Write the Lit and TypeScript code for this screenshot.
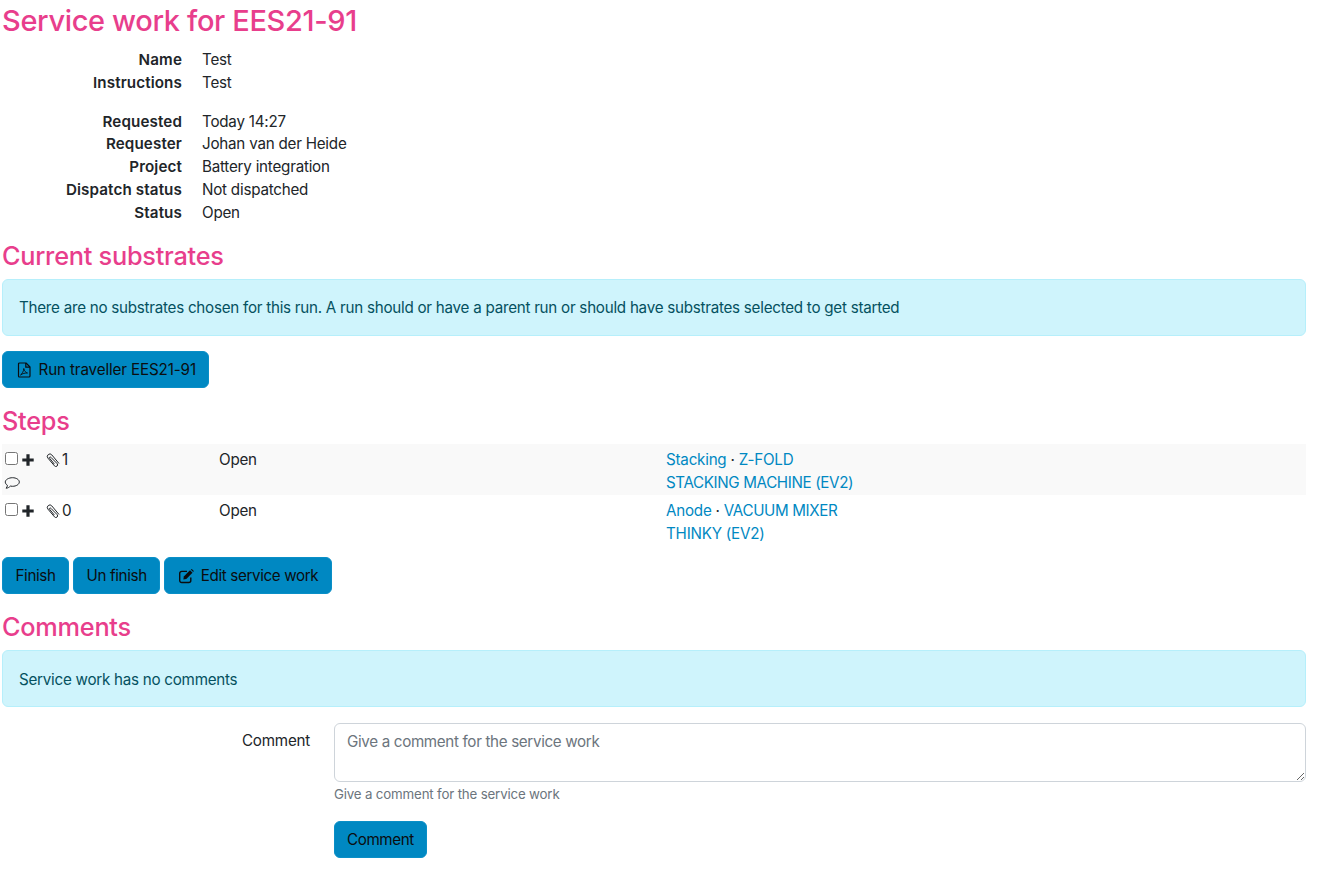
import { LitElement, html, css } from "lit";
import { customElement } from "lit/decorators.js";

const pdf = html`<svg class="ic" viewBox="0 0 16 16" fill="none" stroke="currentColor" stroke-width="1.200"><path d="M3.500 1h6.500l4 4v9a1 1 0 0 1-1 1H3.500a1 1 0 0 1-1-1V2a1 1 0 0 1 1-1z" stroke-linejoin="round"/><path d="M9.800 1v4.200H14"/><path d="M4.500 13c1.800-1.200 3.200-4 3.300-6.500.4 2.500 2 4 3.700 4.500-2.300-.1-5 .5-7 2z" stroke-width=".9" stroke-linejoin="round"/></svg>`;
const edit = html`<svg class="ic" viewBox="0 0 16 16" fill="none" stroke="currentColor" stroke-width="1.400"><path d="M12.800 9.500v3a2 2 0 0 1-2 2H3.700a2 2 0 0 1-2-2V5.400a2 2 0 0 1 2-2h5.300"/><path d="M5.800 8.500 12 2.300l2.500 2.500-6.200 6.200-2.900.4z" fill="currentColor" stroke="none"/><path d="M12.800 1.500 13.800 .9l2 2-.6 1z" fill="currentColor" stroke="none"/></svg>`;
const plus = html`<svg class="plus" viewBox="0 0 12 12"><path d="M4.400 .3h3.200v4.100h4.100v3.200H7.600v4.100H4.400V7.600H.3V4.400h4.100z" fill="#212529"/></svg>`;
const clip = html`<svg class="clip" viewBox="0 0 14 14" fill="none" stroke="#212529" stroke-width="1"><path d="M13 10.500 5.800 1.900a2.500 2.500 0 0 0-3.900 3.200l6.600 7.800a1.700 1.700 0 0 0 2.700-2.200L4.900 4.300a.8.800 0 0 0-1.300 1l4.800 5.800"/></svg>`;
const bubble = html`<svg class="bubble" viewBox="0 0 16 12" fill="none" stroke="#212529" stroke-width="1"><path d="M8.500.7c3.700 0 6.800 1.900 6.800 4.300s-3.100 4.300-6.800 4.300c-.8 0-1.500-.1-2.200-.2-1 1.100-2.600 2.100-4.200 2.100.7-.7 1.300-1.700 1.300-2.900C2 7.400 1.300 6.200 1.300 5 1.300 2.600 4.800.7 8.500.7z"/></svg>`;

@customElement("app-root")
export class AppRoot extends LitElement {
  static styles = css`
    :host { display: block; padding: 0 14px 0 2px; font-family: Inter, "Liberation Sans", sans-serif; font-size: 15.2px; line-height: 22.8px; color: #212529; letter-spacing: -.23px; }
    h1, h2 { margin: 0; color: #e83e8c; font-weight: 500; line-height: 1.2; }
    h1 { font-size: 29px; line-height: 36.500px; letter-spacing: -.35px; padding-top: 3px; margin-bottom: 9.500px; }
    h2 { font-size: 25.300px; letter-spacing: -.25px; margin-bottom: 8px; }
    dl { margin: 0 0 16px; display: grid; grid-template-columns: 180px 1fr; column-gap: 20px; }
    dt { font-weight: 600; text-align: right; letter-spacing: .12px; }
    dd { margin: 0; }
    .gap { grid-column: 1 / 3; height: 16px; }
    .alert { background: #cff4fc; border: 1px solid #b6effb; color: #055160; border-radius: 6px; padding: 17.500px 16px 14.500px; margin-bottom: 15.500px; line-height: 22.800px; letter-spacing: -.26px; }
    .btn { display: inline-flex; align-items: center; gap: 7px; height: 37px; box-sizing: border-box; padding: 2px 12.500px 0; background: #0088c2; border: 1px solid #0a8fc7; border-radius: 6px; color: #0b0d0f; font: inherit; letter-spacing: -.37px; }
    .btn.wide { letter-spacing: -.13px; }
    .btn.com { letter-spacing: -.38px; padding: 2px 12px 0; }
    .ic { width: 16px; height: 16px; margin-bottom: 2px; }
    .runbar { margin-bottom: 17.500px; }
    .steps { margin: .6px 0 10.400px; }
    .row { display: grid; grid-template-columns: 213px 447px 1fr; height: 51.400px; box-sizing: border-box; padding: 4.400px 0 0; }
    .row.odd { background: #f9f9f9; padding-top: 5px; }
    .row > div { padding: 0 4px; }
    .row > .tc { padding: 0 3px; }
    .tools { display: flex; flex-wrap: wrap; align-items: center; height: 22.800px; }
    .cb { width: 13px; height: 13px; box-sizing: border-box; border: 1px solid #767676; border-radius: 2.500px; background: #fff; margin: 0 4px 3px 0; }
    .plus { width: 12px; height: 12px; margin: 0 12px 1px 0; }
    .clip { width: 14px; height: 14px; margin: 0 2px 1px 0; }
    .bubble { width: 16px; height: 12px; display: block; margin: 5px 0 0 -1px; }
    a { color: #0088c2; text-decoration: none; }
    a.up { letter-spacing: -.38px; }
    .actions { display: flex; gap: 4px; margin-bottom: 17.500px; }
    .form { display: grid; grid-template-columns: 308px 1fr; column-gap: 24px; }
    .form label { text-align: right; padding-top: 8px; }
    textarea { display: block; box-sizing: border-box; width: 100%; height: 59.500px; margin: .5px 0 0; padding: 7px 12px 4px; border: 1px solid #ced4da; border-radius: 6px; font: inherit; letter-spacing: -.34px; color: #212529; }
    textarea::placeholder { color: #6c757d; opacity: 1; }
    .help { font-size: 13.300px; line-height: 20px; letter-spacing: -.17px; color: #6c757d; margin-top: 1.500px; margin-bottom: 17px; }
    .pad { height: 11px; }
  `;

  render() {
    return html`
      <h1>Service work for EES21-91</h1>
      <dl>
        <dt>Name</dt><dd>Test</dd>
        <dt>Instructions</dt><dd>Test</dd>
        <div class="gap"></div>
        <dt>Requested</dt><dd>Today 14:27</dd>
        <dt>Requester</dt><dd>Johan van der Heide</dd>
        <dt>Project</dt><dd>Battery integration</dd>
        <dt>Dispatch status</dt><dd>Not dispatched</dd>
        <dt>Status</dt><dd>Open</dd>
      </dl>
      <h2>Current substrates</h2>
      <div class="alert">There are no substrates chosen for this run. A run should or have a parent run or should have substrates selected to get started</div>
      <div class="runbar"><button class="btn wide">${pdf}Run traveller EES21-91</button></div>
      <h2>Steps</h2>
      <div class="steps">
        <div class="row odd">
          <div class="tc"><div class="tools"><input type="checkbox" class="cb" />${plus}${clip}<span>1</span></div>${bubble}</div>
          <div>Open</div>
          <div><a href="#">Stacking</a> · <a href="#">Z-FOLD</a><br /><a class="up" href="#">STACKING MACHINE (EV2)</a></div>
        </div>
        <div class="row">
          <div class="tc"><div class="tools"><input type="checkbox" class="cb" />${plus}${clip}<span>0</span></div></div>
          <div>Open</div>
          <div><a href="#">Anode</a> · <a class="up" href="#">VACUUM MIXER</a><br /><a href="#">THINKY (EV2)</a></div>
        </div>
      </div>
      <div class="actions">
        <button class="btn">Finish</button>
        <button class="btn">Un finish</button>
        <button class="btn">${edit}Edit service work</button>
      </div>
      <h2>Comments</h2>
      <div class="alert">Service work has no comments</div>
      <div class="form">
        <label>Comment</label>
        <div>
          <textarea placeholder="Give a comment for the service work"></textarea>
          <div class="help">Give a comment for the service work</div>
          <button class="btn com">Comment</button>
          <div class="pad"></div>
        </div>
      </div>
    `;
  }
}
